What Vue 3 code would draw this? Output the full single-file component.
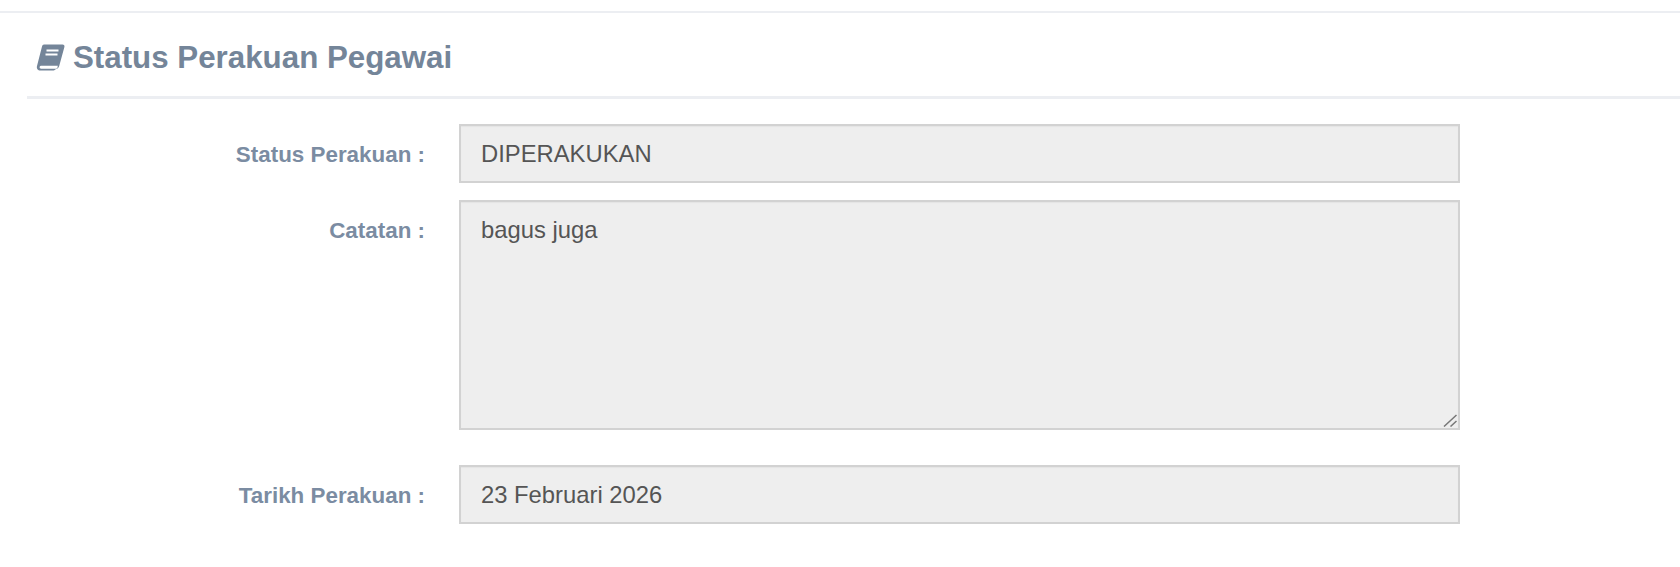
<script setup>
const fields = [
  { label: 'Status Perakuan :', value: 'DIPERAKUKAN' },
  { label: 'Catatan :', value: 'bagus juga', multiline: true },
  { label: 'Tarikh Perakuan :', value: '23 Februari 2026' },
]
</script>

<template>
  <div class="page">
    <div class="panel">
      <h2 class="panel-title">
        <svg class="book-icon" viewBox="0 0 29 27" aria-hidden="true">
          <path
            d="M8 .5h18.500c1.500 0 2.300 1.100 1.900 2.500l-5.200 19c-.6 2-1.800 2.800-3.500 3.200-.9.800-1.800 1.300-3 1.300H4.500C1.800 26.500.3 24.500 1 22L6 2.500C6.300 1.200 7 .5 8 .5z"
          />
          <path class="book-page" d="M3.700 22.800c-.3 1.200.4 1.900 1.400 1.900h14.700c.9 0 1.400-.4 1.700-1.200l.3-1.800H5.500c-.9 0-1.500.2-1.800 1.100z" />
          <path class="book-line" d="M10.500 6.500h12M9.500 10.500h12" />
        </svg>
        <span>Status Perakuan Pegawai</span>
      </h2>
      <form class="form">
        <div
          v-for="field in fields"
          :key="field.label"
          class="form-row"
          :class="{ 'is-multiline': field.multiline }"
        >
          <label class="form-label">{{ field.label }}</label>
          <div class="form-field">
            <template v-if="field.multiline">
              <textarea class="form-control form-textarea" readonly :value="field.value"></textarea>
              <svg class="grip" viewBox="0 0 14 13" aria-hidden="true">
                <path d="M1 12.500 13.500 1M7.500 12.500l6-5.500" />
              </svg>
            </template>
            <input v-else class="form-control" type="text" readonly :value="field.value" />
          </div>
        </div>
      </form>
    </div>
  </div>
</template>

<style scoped>
.page {
  height: 567px;
  padding-top: 11px;
  box-sizing: border-box;
  background: #fff;
  font-family: "Liberation Sans", Arial, sans-serif;
  overflow: hidden;
}

.panel {
  border-top: 2px solid #eceef2;
  padding-left: 27px;
}

.panel-title {
  display: flex;
  align-items: center;
  gap: 8px;
  height: 86px;
  margin: 0;
  padding: 6px 0 0 9px;
  border-bottom: 3px solid #eceef2;
  box-sizing: border-box;
  font-size: 31.300px;
  font-weight: 700;
  color: #748599;
}

.book-icon {
  width: 29px;
  height: 27px;
  flex: 0 0 auto;
  fill: #748599;
}

.book-page {
  fill: #fff;
}

.book-line {
  fill: none;
  stroke: #fff;
  stroke-width: 2;
}

.form {
  padding-top: 25px;
}

.form-row {
  display: flex;
  margin-bottom: 17px;
}

.form-row.is-multiline {
  margin-bottom: 35px;
}

.form-label {
  width: 398px;
  padding-top: 19px;
  flex: 0 0 auto;
  text-align: right;
  font-size: 22.400px;
  line-height: 24px;
  font-weight: 700;
  color: #7b8ca2;
}

.form-field {
  position: relative;
  width: 1001px;
  margin-left: 34px;
}

.form-control {
  display: block;
  width: 100%;
  height: 59px;
  padding: 0 20px;
  box-sizing: border-box;
  border: 2px solid #d2d2d2;
  border-radius: 0;
  outline: none;
  box-shadow: inset 0 1px 1px rgba(0, 0, 0, 0.04);
  background: #eee;
  font-family: inherit;
  font-size: 23.800px;
  color: #555;
}

.form-textarea {
  height: 230px;
  padding: 12px 20px;
  line-height: 32px;
  resize: none;
}

.grip {
  position: absolute;
  right: 3px;
  bottom: 3px;
  width: 14px;
  height: 13px;
  fill: none;
  stroke: #777;
  stroke-width: 1.500;
}
</style>

<style>
html,
body {
  margin: 0;
  background: #fff;
}
</style>
